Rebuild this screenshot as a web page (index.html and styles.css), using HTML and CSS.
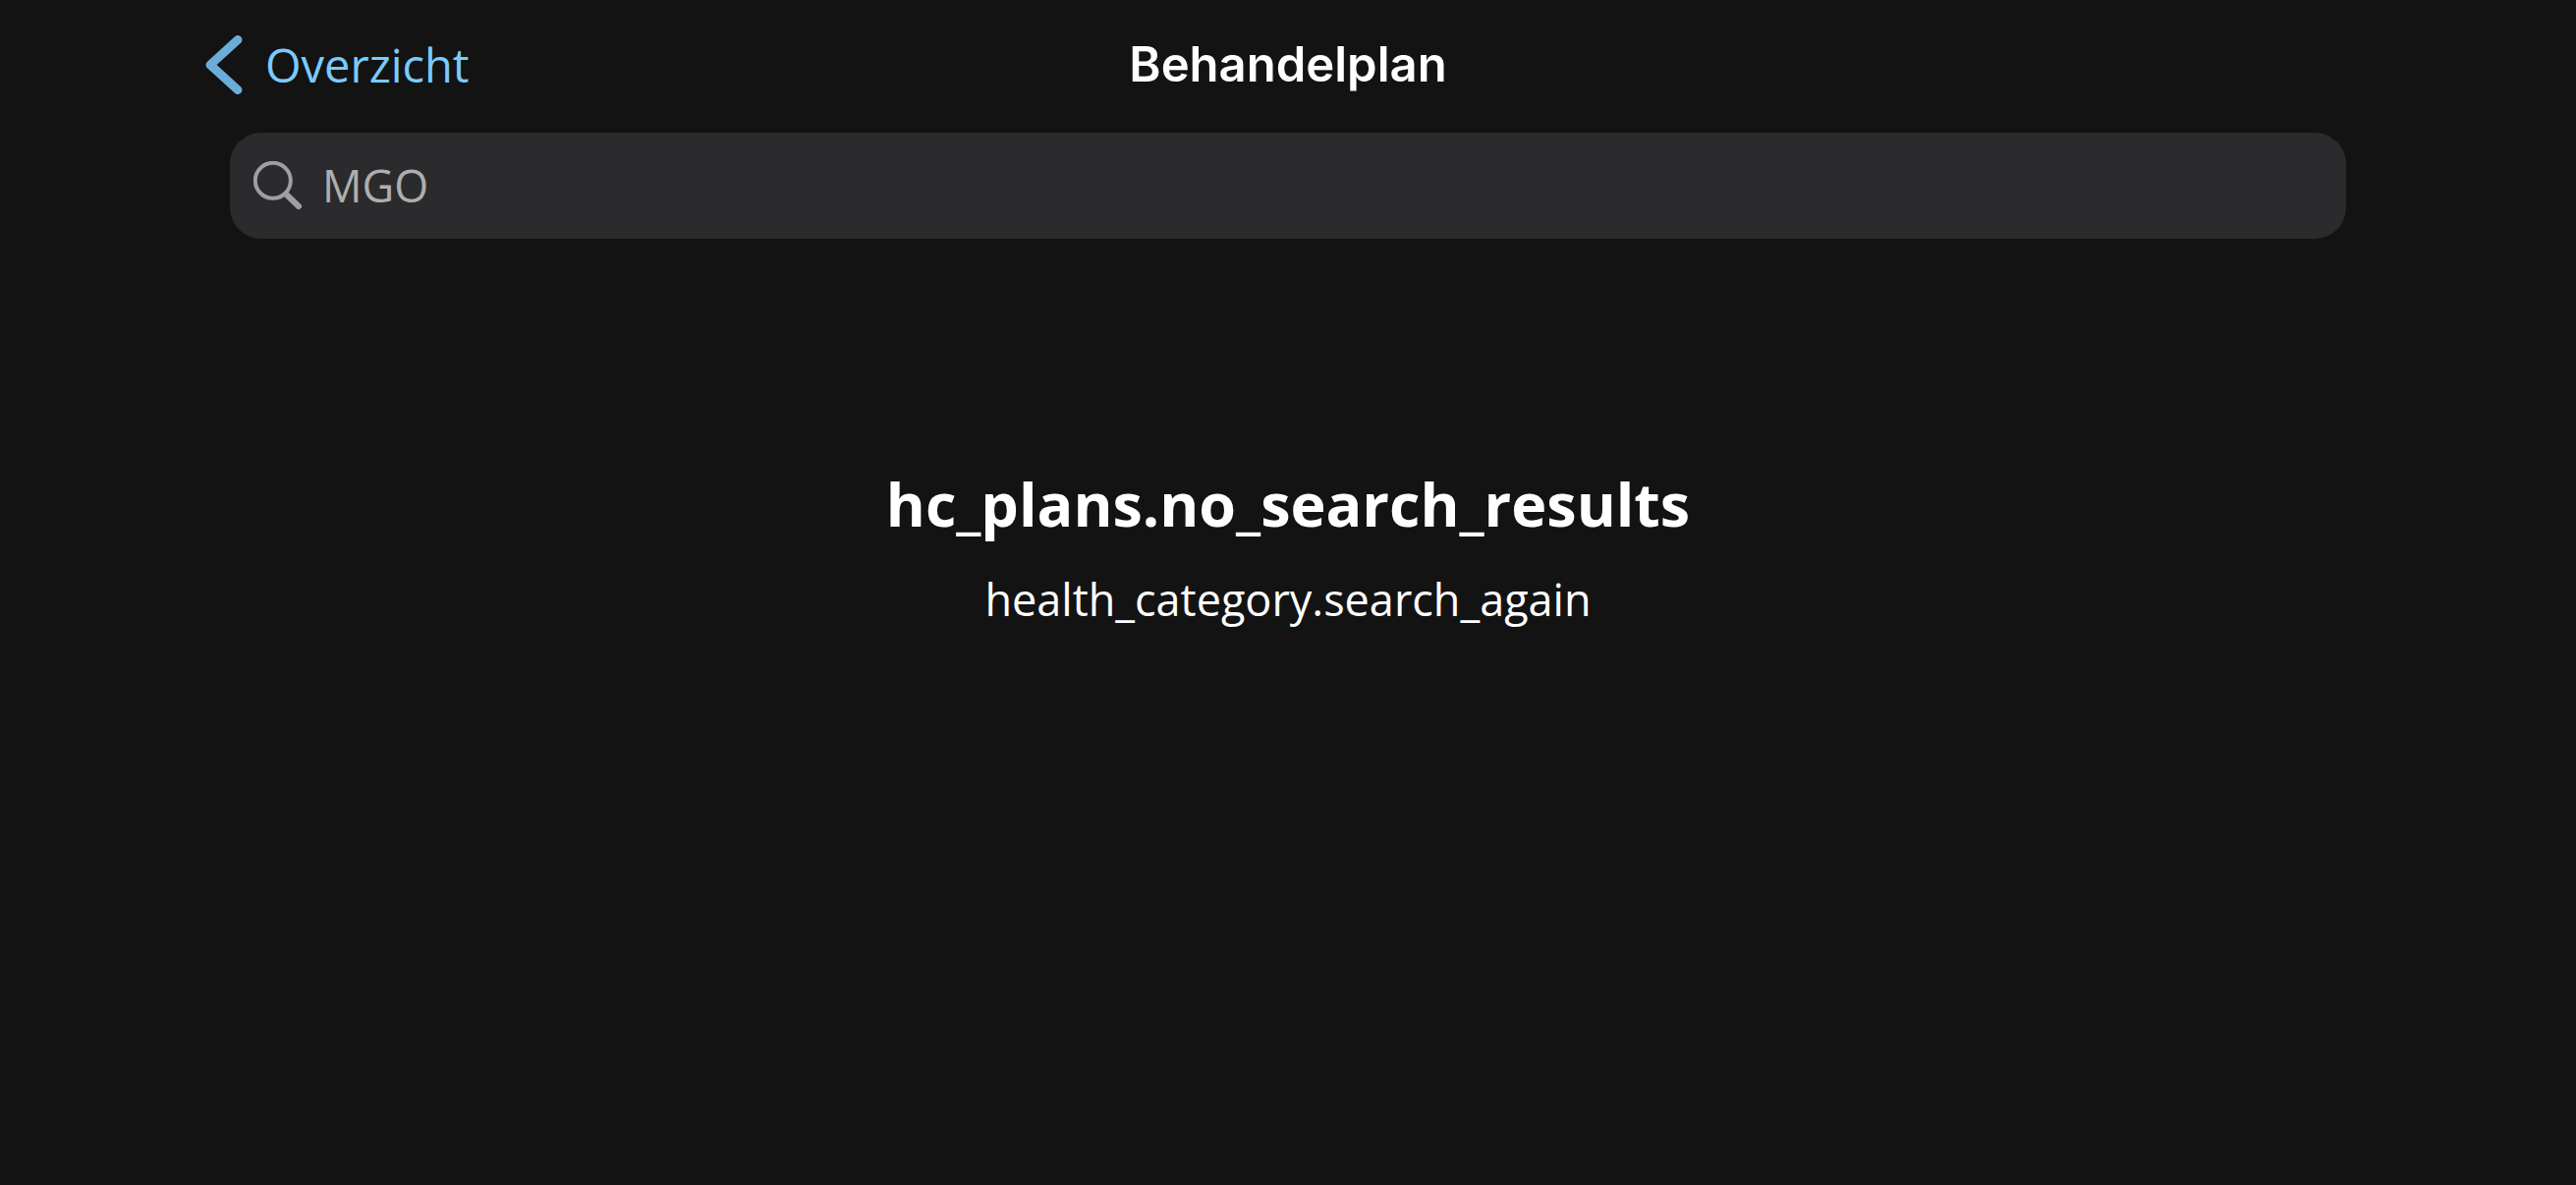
FILE: index.html
```html
<!DOCTYPE html>
<html lang="nl">
<head>
<meta charset="utf-8">
<meta name="viewport" content="width=device-width, initial-scale=1">
<title>Behandelplan</title>
<link rel="stylesheet" href="styles.css">
</head>
<body>
<header class="navbar">
  <a class="back" href="#">
    <svg class="back-icon" viewBox="0 0 40 64" aria-hidden="true"><path d="M34 6.500 6 32 34 57.500"/></svg>
    <span>Overzicht</span>
  </a>
  <h1 class="title">Behandelplan</h1>
</header>
<main class="content">
  <form class="search" role="search">
    <label class="search-label" for="query" aria-label="Zoeken">
      <svg class="search-icon" viewBox="0 0 50 50" aria-hidden="true"><circle cx="19.800" cy="19.800" r="18"/><path class="handle" d="M33 33.500 46 46"/></svg>
    </label>
    <input class="search-input" id="query" type="search" value="MGO">
  </form>
  <section class="empty">
    <h2 class="empty-title">hc_plans.no_search_results</h2>
    <p class="empty-text">health_category.search_again</p>
  </section>
</main>
</body>
</html>
```
FILE: styles.css
```css
* {
  box-sizing: border-box;
}

body {
  margin: 0;
  min-height: 100vh;
  background: #131313;
  color: #fff;
  font-family: "Open Sans", "Noto Sans", sans-serif;
}

.navbar {
  display: grid;
  grid-template-columns: 1fr auto 1fr;
  align-items: center;
  height: 132px;
  padding: 0 208px;
}

.back {
  display: flex;
  align-items: center;
  gap: 22px;
  color: #7acbff;
  font-size: 47px;
  line-height: 64px;
  text-decoration: none;
}

.back-icon {
  width: 40px;
  height: 64px;
  fill: none;
  stroke: #6badd8;
  stroke-width: 9;
  stroke-linecap: round;
  stroke-linejoin: round;
}

.title {
  margin: 0;
  font-family: Inter, "Liberation Sans", sans-serif;
  font-size: 49px;
  font-weight: 600;
  line-height: 64px;
}

.content {
  padding: 3px 234px 0;
}

.search {
  display: flex;
  align-items: center;
  gap: 20px;
  height: 108px;
  padding: 0 24px;
  border-radius: 32px;
  background: #2b2b2d;
}

.search-label {
  display: flex;
}

.search-icon {
  width: 50px;
  height: 50px;
  fill: none;
  stroke: #9e9ea6;
  stroke-width: 4;
  stroke-linecap: round;
}

.handle {
  stroke-width: 6;
}

.search-input {
  flex: 1;
  min-width: 0;
  padding: 0;
  border: 0;
  outline: 0;
  appearance: none;
  background: transparent;
  color: #aeaeae;
  font: inherit;
  font-size: 45px;
  line-height: 64px;
}

.empty {
  padding-top: 222px;
  text-align: center;
}

.empty-title {
  margin: 0;
  font-size: 61px;
  font-weight: 700;
  line-height: 96px;
}

.empty-text {
  margin: 17px 0 0;
  font-size: 45px;
  line-height: 64px;
}
```
